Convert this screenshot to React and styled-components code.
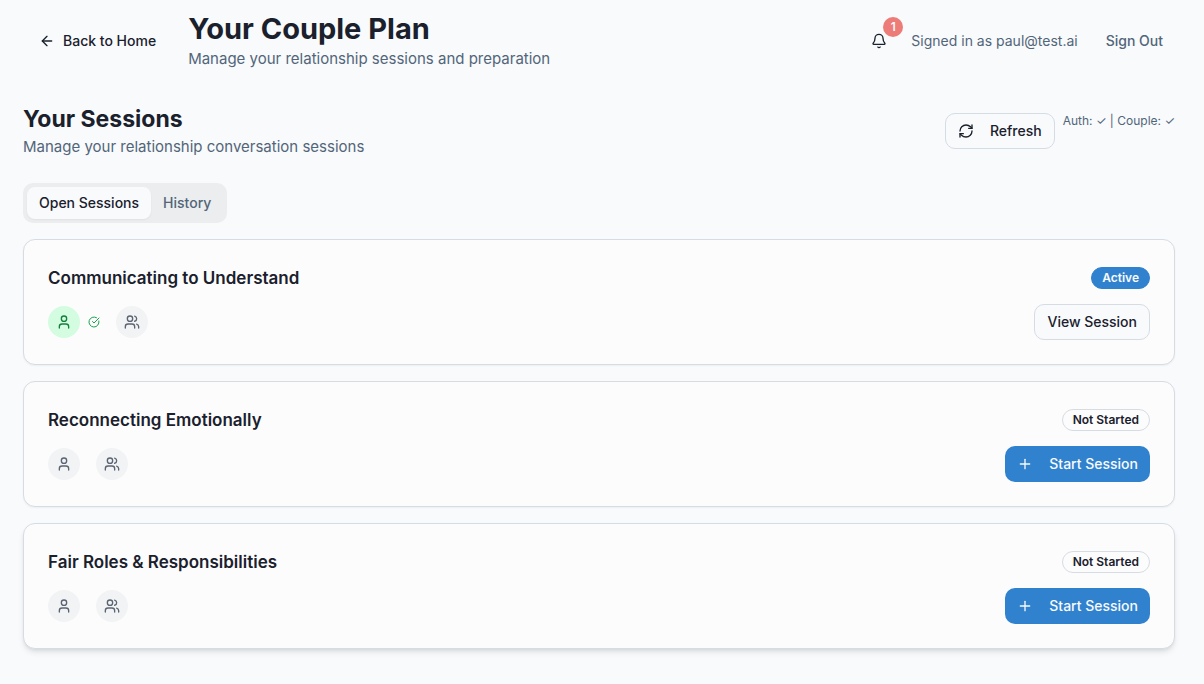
import React, { useState } from "react";
import styled, { createGlobalStyle } from "styled-components";
import { ArrowLeft, Bell, CircleCheckBig, Plus, RefreshCw, User, Users } from "lucide-react";


const GlobalStyle = createGlobalStyle`
  * {
    box-sizing: border-box;
  }

  body {
    margin: 0;
    background: #f8fafc;
    color: #1a202c;
    font-family: Inter, "Liberation Sans", sans-serif;
    font-size: 15px;
    line-height: 24px;
    -webkit-font-smoothing: antialiased;
  }

  h1, h2, h3, p {
    margin: 0;
  }
`;

const Page = styled.div`
  padding: 11px 29px 24px 23px;
`;

const Header = styled.header`
  display: flex;
  align-items: center;
  justify-content: space-between;
  margin-bottom: 32px;
`;

const HeaderGroup = styled.div`
  display: flex;
  align-items: center;
  gap: 16px;
`;

const PageTitle = styled.h1`
  font-size: 29px;
  line-height: 36px;
  font-weight: 700;
`;

const SectionTitle = styled.h2`
  font-size: 23px;
  line-height: 32px;
  font-weight: 700;
`;

const Subtitle = styled.p`
  color: #526579;
`;

const Button = styled.button`
  display: inline-flex;
  align-items: center;
  gap: 16px;
  height: 36px;
  padding: 0 12px;
  border: 1px solid #d6dce4;
  border-radius: 10px;
  background: #f8fafc;
  color: #1a202c;
  font-family: inherit;
  font-size: 14px;
  line-height: 20px;
  font-weight: 500;
  cursor: pointer;
`;

const PrimaryButton = styled(Button)`
  border: none;
  background: #3182ce;
  color: #f8fafc;
`;

const GhostButton = styled(Button)`
  border: none;
  background: transparent;
  color: ${({ $muted }) => ($muted ? "#526579" : "#1a202c")};
`;

const BackLink = styled.a`
  display: inline-flex;
  align-items: center;
  gap: 8px;
  padding: 8px 16px;
  color: #1a202c;
  font-size: 14px;
  line-height: 20px;
  font-weight: 500;
  text-decoration: none;
`;

const BellButton = styled(GhostButton)`
  position: relative;
  padding: 0 8px;
`;

const Count = styled.span`
  position: absolute;
  top: -6px;
  right: -8px;
  width: 20px;
  height: 20px;
  border-radius: 50%;
  background: #ed7b78;
  color: #f8fafc;
  font-size: 12px;
  line-height: 20px;
  font-weight: 600;
  text-align: center;
`;

const SignedIn = styled.span`
  color: #526579;
  font-size: 14px;
  line-height: 20px;
`;

const SectionHead = styled.div`
  display: flex;
  align-items: center;
  justify-content: space-between;
  margin-bottom: 24px;
`;

const Status = styled.div`
  display: flex;
  align-items: flex-start;
  gap: 8px;
`;

const StatusText = styled.span`
  color: #526579;
  font-size: 12px;
  line-height: 16px;
`;

const TabList = styled.div`
  display: inline-flex;
  padding: 4px;
  border-radius: 10px;
  background: #ebedef;
`;

const Tab = styled.button`
  height: 32px;
  padding: 0 12px;
  border: none;
  border-radius: 8px;
  background: ${({ $active }) => ($active ? "#f8fafc" : "transparent")};
  box-shadow: ${({ $active }) => ($active ? "0 1px 2px rgba(0, 0, 0, 0.05)" : "none")};
  color: ${({ $active }) => ($active ? "#1a202c" : "#526579")};
  font-family: inherit;
  font-size: 14px;
  line-height: 20px;
  font-weight: 500;
  cursor: pointer;
`;

const SessionList = styled.div`
  display: grid;
  gap: 16px;
  margin-top: 16px;
`;

const Card = styled.article`
  display: grid;
  gap: 12px;
  padding: 24px;
  border: 1px solid #d6dce4;
  border-radius: 12px;
  background: #fcfcfd;
  box-shadow: ${({ $raised }) =>
    $raised
      ? "0 4px 6px -1px rgba(0, 0, 0, 0.1), 0 2px 4px -2px rgba(0, 0, 0, 0.1)"
      : "0 1px 2px rgba(0, 0, 0, 0.05)"};
`;

const CardRow = styled.div`
  display: flex;
  align-items: center;
  justify-content: space-between;
`;

const CardTitle = styled.h3`
  font-size: 17px;
  line-height: 28px;
  font-weight: 600;
`;

const Badge = styled.span`
  padding: 2px 10px;
  border: 1px solid ${({ $active }) => ($active ? "#3182ce" : "#d6dce4")};
  border-radius: 11px;
  background: ${({ $active }) => ($active ? "#3182ce" : "transparent")};
  color: ${({ $active }) => ($active ? "#f8fafc" : "#1a202c")};
  font-size: 12px;
  line-height: 16px;
  font-weight: 600;
`;

const People = styled.div`
  display: flex;
  align-items: center;
  gap: 16px;
`;

const Person = styled.div`
  display: flex;
  align-items: center;
  gap: 8px;
  color: #16a34a;
`;

const Avatar = styled.span`
  display: flex;
  align-items: center;
  justify-content: center;
  width: 32px;
  height: 32px;
  border-radius: 50%;
  background: ${({ $ready }) => ($ready ? "#d3fce1" : "#f1f3f5")};
  color: ${({ $ready }) => ($ready ? "#15803d" : "#5b6472")};
`;

const sessions = [
    { title: "Communicating to Understand", active: true, ready: true },
    { title: "Reconnecting Emotionally" },
    { title: "Fair Roles & Responsibilities", raised: true },
];

function SessionCard({ session }) {
    const { title, active, ready, raised } = session;

    return (
        <Card $raised={raised}>
            <CardRow>
                <CardTitle>{title}</CardTitle>
                <Badge $active={active}>{active ? "Active" : "Not Started"}</Badge>
            </CardRow>
            <CardRow>
                <People>
                    <Person>
                        <Avatar $ready={ready}><User size={16} /></Avatar>
                        {ready && <CircleCheckBig size={12} />}
                    </Person>
                    <Avatar><Users size={16} /></Avatar>
                </People>
                {active ? (
                    <Button type="button">View Session</Button>
                ) : (
                    <PrimaryButton type="button">
                        <Plus size={16} />
                        Start Session
                    </PrimaryButton>
                )}
            </CardRow>
        </Card>
    );
}

function App() {
    const [tab, setTab] = useState("Open Sessions");

    return (
        <Page>
            <GlobalStyle />
            <Header>
                <HeaderGroup>
                    <BackLink href="#home">
                        <ArrowLeft size={16} />
                        Back to Home
                    </BackLink>
                    <div>
                        <PageTitle>Your Couple Plan</PageTitle>
                        <Subtitle>Manage your relationship sessions and preparation</Subtitle>
                    </div>
                </HeaderGroup>
                <HeaderGroup>
                    <BellButton type="button" aria-label="Notifications">
                        <Bell size={16} />
                        <Count>1</Count>
                    </BellButton>
                    <SignedIn>Signed in as paul@test.ai</SignedIn>
                    <GhostButton type="button" $muted>Sign Out</GhostButton>
                </HeaderGroup>
            </Header>

            <main>
                <SectionHead>
                    <div>
                        <SectionTitle>Your Sessions</SectionTitle>
                        <Subtitle>Manage your relationship conversation sessions</Subtitle>
                    </div>
                    <Status>
                        <Button type="button">
                            <RefreshCw size={16} />
                            Refresh
                        </Button>
                        <StatusText>Auth: ✓ | Couple: ✓</StatusText>
                    </Status>
                </SectionHead>

                <TabList role="tablist">
                    {["Open Sessions", "History"].map((name) => (
                        <Tab
                            key={name}
                            type="button"
                            role="tab"
                            aria-selected={tab === name}
                            $active={tab === name}
                            onClick={() => setTab(name)}
                        >
                            {name}
                        </Tab>
                    ))}
                </TabList>

                {tab === "Open Sessions" && (
                    <SessionList>
                        {sessions.map((session) => (
                            <SessionCard key={session.title} session={session} />
                        ))}
                    </SessionList>
                )}
            </main>
        </Page>
    );
}

export default App;
